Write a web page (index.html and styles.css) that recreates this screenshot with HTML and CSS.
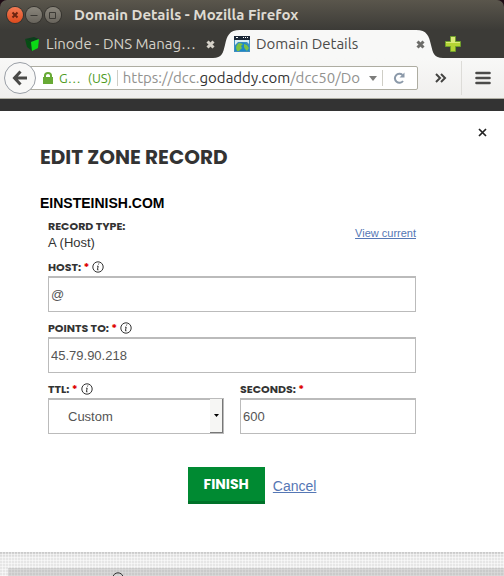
FILE: index.html
```html
<!DOCTYPE html>
<html lang="en">
<head>
<meta charset="utf-8">
<title>Domain Details - Mozilla Firefox</title>
<link rel="stylesheet" href="styles.css">
</head>
<body>
<header class="chrome">
  <div class="titlebar">
    <button class="win win-close" aria-label="Close window"><svg width="16" height="16" viewBox="0 0 16 16"><path d="M5.500 5.500l5 5m0-5l-5 5"/></svg></button>
    <button class="win" aria-label="Minimize"><svg width="16" height="16" viewBox="0 0 16 16"><path d="M4.500 8.500h7"/></svg></button>
    <button class="win" aria-label="Maximize"><svg width="16" height="16" viewBox="0 0 16 16"><path d="M4.500 5.500h6v6h-6z"/></svg></button>
    <span class="window-title">Domain Details - Mozilla Firefox</span>
  </div>
  <nav class="tabs" aria-label="Tabs">
    <div class="tab tab-back">
      <svg class="favicon" width="16" height="16" viewBox="0 0 16 16"><path fill="#0d3d1c" d="M0 3l9-2 5 2-8 3z"/><path fill="#064d14" d="M0 3l6 3 1 9-5-4z"/><path fill="#0bd915" d="M6 6l8-3-1 9-6 3z"/></svg>
      <span class="tab-label">Linode - DNS Manag…</span>
      <button class="tab-close" aria-label="Close tab"><svg width="9" height="9" viewBox="0 0 9 9"><path d="M1.500 1.500l6 6m0-6l-6 6"/></svg></button>
    </div>
    <div class="tab tab-active">
      <svg class="curve" width="27" height="28" viewBox="0 0 27 28"><path d="M0 28C9 28 10 23 12 15C14 6 16 0 27 0V28z"/></svg>
      <div class="tab-body">
        <svg class="favicon" width="16" height="16" viewBox="0 0 16 16"><path fill="#3f8fc0" d="M0 4h16v12H0z"/><path fill="#d9eef4" d="M1 4h14v4l-2-2H4L1 9z"/><path fill="#1c87c9" d="M1 15V11c2-6 12-6 14 0v4z"/><path fill="#7cc243" d="M2 12c0-3 2-5 4-5l3 1-2 2 1 2-3 3H3zM10 8l3 1 2 3-2 3-2-2-1-2z"/><path fill="#1b2736" d="M0 0h16v4H0z"/><path fill="#fff" d="M9 1h1v1H9zM11 1h1v1h-1zM13 1h1v1h-1zM2 1h2v1H2z"/></svg>
        <span class="tab-label">Domain Details</span>
        <button class="tab-close" aria-label="Close tab"><svg width="9" height="9" viewBox="0 0 9 9"><path d="M1.500 1.500l6 6m0-6l-6 6"/></svg></button>
      </div>
      <svg class="curve" width="27" height="28" viewBox="0 0 27 28"><path d="M0 0C11 0 13 6 15 15C17 23 18 28 27 28H0z"/></svg>
    </div>
    <button class="new-tab" aria-label="New tab"><svg width="16" height="16" viewBox="0 0 16 16"><path fill="#b5d334" stroke="#6f9f2c" d="M5.500.500h5v5h5v5h-5v5h-5v-5h-5v-5h5z"/><path fill="#dcea78" d="M6 1h4v5h5v1H1V6h5z"/></svg></button>
  </nav>
  <div class="toolbar">
    <button class="back" aria-label="Back"><svg width="16" height="16" viewBox="0 0 16 16"><path d="M8.500 1.500L2.500 8l6 6.500M3 8h12" fill="none" stroke="#4a4a48" stroke-width="3"/></svg></button>
    <div class="address">
      <svg class="lock" width="10" height="12" viewBox="0 0 10 12"><path fill="none" stroke="#68aa35" stroke-width="2" d="M2 6V3.500a3 2.500 0 0 1 6 0V6"/><path fill="#68aa35" d="M0 5h10v7H0z"/></svg>
      <span class="identity">G…</span>
      <span class="country">(US)</span>
      <span class="url">https://dcc.<b>godaddy.com</b>/dcc50/Do</span>
      <button class="history" aria-label="Show history"><svg width="8" height="5" viewBox="0 0 8 5"><path fill="#7d7d7b" d="M0 0h8L4 5z"/></svg></button>
      <button class="reload" aria-label="Reload"><svg width="12" height="12" viewBox="0 0 12 12"><path fill="none" stroke="#8b99a9" stroke-width="2" d="M9.500 3A4.500 4.500 0 1 0 10 9"/><path fill="#8b99a9" d="M6.500 5.500h5v-5z"/></svg></button>
    </div>
    <button class="more" aria-label="More tools"><svg width="12" height="10" viewBox="0 0 12 10"><path d="M1 1l4 4-4 4M6 1l4 4-4 4" fill="none" stroke="#434341" stroke-width="2"/></svg></button>
    <button class="menu" aria-label="Open menu"><svg width="16" height="14" viewBox="0 0 16 14"><path d="M1.500 2h13M1.500 7h13M1.500 12h13" fill="none" stroke="#4b4b49" stroke-width="2.600" stroke-linecap="round"/></svg></button>
  </div>
</header>
<div class="site-bar"></div>
<main class="dialog" role="dialog" aria-labelledby="dialog-title">
  <button class="dismiss" aria-label="Close"><svg width="9" height="9" viewBox="0 0 9 9"><path d="M1 1l7 7m0-7l-7 7" stroke="#222" stroke-width="1.700"/></svg></button>
  <h1 id="dialog-title">EDIT ZONE RECORD</h1>
  <h2>EINSTEINISH.COM</h2>
  <form class="record">
    <div class="type-row">
      <div>
        <div class="label">RECORD TYPE:</div>
        <div class="value">A (Host)</div>
      </div>
      <a class="view" href="#">View current</a>
    </div>
    <div class="field">
      <div class="label"><label for="host">HOST: <em>*</em></label><svg class="info" width="12" height="12" viewBox="0 0 12 12"><circle cx="6" cy="6" r="5.200"/><path d="M6.800 2.500l-.3 1M5 5.200h1.200L5.400 8.800h1.100"/></svg></div>
      <input id="host" type="text" value="@">
    </div>
    <div class="field">
      <div class="label"><label for="points">POINTS TO: <em>*</em></label><svg class="info" width="12" height="12" viewBox="0 0 12 12"><circle cx="6" cy="6" r="5.200"/><path d="M6.800 2.500l-.3 1M5 5.200h1.200L5.400 8.800h1.100"/></svg></div>
      <input id="points" type="text" value="45.79.90.218">
    </div>
    <div class="pair">
      <div class="field">
        <div class="label"><label for="ttl">TTL: <em>*</em></label><svg class="info" width="12" height="12" viewBox="0 0 12 12"><circle cx="6" cy="6" r="5.200"/><path d="M6.800 2.500l-.3 1M5 5.200h1.200L5.400 8.800h1.100"/></svg></div>
        <div class="select-wrap">
          <select id="ttl"><option>Custom</option></select>
          <span class="arrow"><svg width="5" height="3" viewBox="0 0 5 3"><path d="M0 0h5L2.500 3z"/></svg></span>
        </div>
      </div>
      <div class="field">
        <div class="label"><label for="seconds">SECONDS: <em>*</em></label></div>
        <input id="seconds" type="text" value="600">
      </div>
    </div>
  </form>
  <div class="actions">
    <button class="finish" type="button">FINISH</button>
    <a class="cancel" href="#">Cancel</a>
  </div>
</main>
<div class="backdrop"><div class="panel"><svg class="info" width="12" height="12" viewBox="0 0 12 12"><circle cx="6" cy="6" r="5.200"/></svg></div></div>
</body>
</html>
```
FILE: styles.css
```css
* { box-sizing: border-box; }
html { height: 100%; background: #1d0b14; }
body {
  margin: 0;
  min-height: 100%;
  display: flex;
  flex-direction: column;
  color: #333;
  font: 13px/16px "Liberation Sans", Arial, sans-serif;
  overflow: hidden;
}
button { border: 0; padding: 0; background: none; font: inherit; color: inherit; }
svg { display: block; flex: none; }

.chrome {
  font-family: Ubuntu, "Noto Sans", sans-serif;
  background: linear-gradient(#5a564c, #3c3b37 30px);
  border-radius: 7px 7px 0 0;
}
.titlebar { display: flex; align-items: center; height: 30px; padding-left: 7px; gap: 3px; }
.win { width: 16px; height: 16px; border-radius: 50%; background: linear-gradient(#8a867c, #68645c); box-shadow: 0 0 0 1px #35332e; }
.win path { fill: none; stroke: #3b3934; }
.win-close { background: linear-gradient(#f37b55, #dd4a1d); }
.win-close path { stroke: #6c2410; stroke-width: 2; }
.window-title { margin-left: 10px; font-size: 15px; font-weight: 700; color: #dfdbd2; white-space: nowrap; }

.tabs { display: flex; height: 28px; font-size: 15px; }
.tab { display: flex; align-items: center; }
.tab-back { width: 213px; padding-left: 25px; color: #d5d1c8; }
.tab-label { margin-left: 6px; white-space: nowrap; flex: 1; }
.tab-back .tab-label { margin-left: 5px; }
.tab-close { width: 9px; margin-right: -2px; position: relative; z-index: 1; }
.tab-close path { stroke: #d5d1c8; stroke-width: 3; }
.tab-active { flex: 1; max-width: 230px; color: #4b4b49; }
.tab-active .tab-close { margin-right: -8px; }
.tab-active .tab-close path { stroke: #6d6d6a; }
.curve { fill: #f8f8f7; }
.tab-body { display: flex; align-items: center; flex: 1; height: 28px; margin: 0 -1px; background: #f8f8f7; }
.tab-body .favicon { margin-left: -5px; }
.new-tab { margin-left: 2px; }

.toolbar {
  display: flex;
  align-items: center;
  height: 41px;
  padding-left: 4px;
  background: linear-gradient(#f8f8f7, #f0efed);
  border-bottom: 1px solid #b0afa4;
}
.back {
  display: grid;
  place-items: center;
  flex: none;
  width: 32px;
  height: 32px;
  border: 1px solid #9a9fa6;
  border-radius: 50%;
  background: #f8f8f7;
  z-index: 1;
}
.address {
  display: flex;
  align-items: center;
  flex: 1;
  min-width: 0;
  height: 24px;
  margin-left: -8px;
  padding-left: 14px;
  border: 1px solid #aeada2;
  border-radius: 2px;
  background: #fff;
  font-size: 15px;
}
.identity, .country { color: #4e9a1e; font-size: 13px; }
.identity { margin-left: 6px; }
.country { margin-left: 7px; padding-right: 5px; border-right: 1px solid #cfcec6; }
.url { flex: 1; min-width: 0; margin-left: 5px; overflow: hidden; white-space: nowrap; color: #92928f; }
.url b { font-weight: 400; color: #333; }
.history { margin: 0 5px 0 6px; }
.reload { height: 16px; padding: 0 12px 0 10px; border-left: 1px solid #cfcec6; }
.more { margin: 0 14px 0 17px; }
.menu { display: grid; place-items: center; height: 34px; padding: 0 13px; border-left: 1px solid #dddcd8; }

.site-bar { height: 12px; background: #333; }
.dialog { display: flex; flex-direction: column; padding: 17px 17px 48px 40px; background: #fff; }
.dismiss { align-self: flex-end; }
h1 { margin: 8px 0 0; font: 700 20px/24px Poppins, Inter, sans-serif; }
h2 { margin: 26px 0 0; font-size: 14px; line-height: 16px; color: #000; }
.record { max-width: 376px; padding: 8px 0 0 8px; width: 100%; }
.type-row { display: flex; justify-content: space-between; align-items: flex-end; margin-bottom: 9px; }
.label { display: flex; align-items: center; gap: 3px; height: 14px; font: 700 11px/14px Poppins, Inter, sans-serif; }
.label em { color: #d00; font-style: normal; }
.value { margin-top: 2px; }
.view { margin-bottom: 10px; font-size: 11px; line-height: 16px; color: #5577b5; }
.field { margin-bottom: 9px; }
.info { fill: none; stroke: #333; }
input, select {
  display: block;
  width: 100%;
  height: 36px;
  margin-top: 2px;
  padding: 0 2px;
  border: 1px solid #bbb;
  border-top-width: 2px;
  border-radius: 0;
  background: #fff;
  color: #555;
  font: 13px/16px "Liberation Sans", Arial, sans-serif;
}
.pair { display: grid; grid-template-columns: 1fr 1fr; gap: 16px; }
.select-wrap { position: relative; margin-top: 2px; }
select { appearance: none; padding-left: 19px; }
.arrow {
  position: absolute;
  top: 1px;
  right: 1px;
  bottom: 1px;
  width: 13px;
  display: grid;
  place-items: center;
  background: #f6f6f4;
  border-right: 1px solid #777;
  border-bottom: 1px solid #777;
  pointer-events: none;
}
.actions { display: flex; align-items: center; justify-content: center; gap: 8px; margin-top: 24px; padding-right: 23px; }
.finish { height: 37px; padding: 0 16px; background: #008a32; border-bottom: 3px solid #007229; color: #fff; font: 700 14px/16px Poppins, Inter, sans-serif; }
.cancel { font-size: 14px; color: #5577b5; }

.backdrop {
  flex: 1;
  display: flex;
  min-height: 24px;
  padding: 16px 0 0 8px;
  background:
    repeating-linear-gradient(90deg, transparent 0 2px, rgba(255, 255, 255, .5) 2px 3px),
    repeating-linear-gradient(transparent 0 2px, rgba(255, 255, 255, .5) 2px 3px),
    linear-gradient(#c8c8c8, #e6e6e6 5px);
}
.panel { flex: 1; height: 8px; padding: 4px 0 0 104px; overflow: hidden; background: rgba(0, 0, 0, .12); }
```
